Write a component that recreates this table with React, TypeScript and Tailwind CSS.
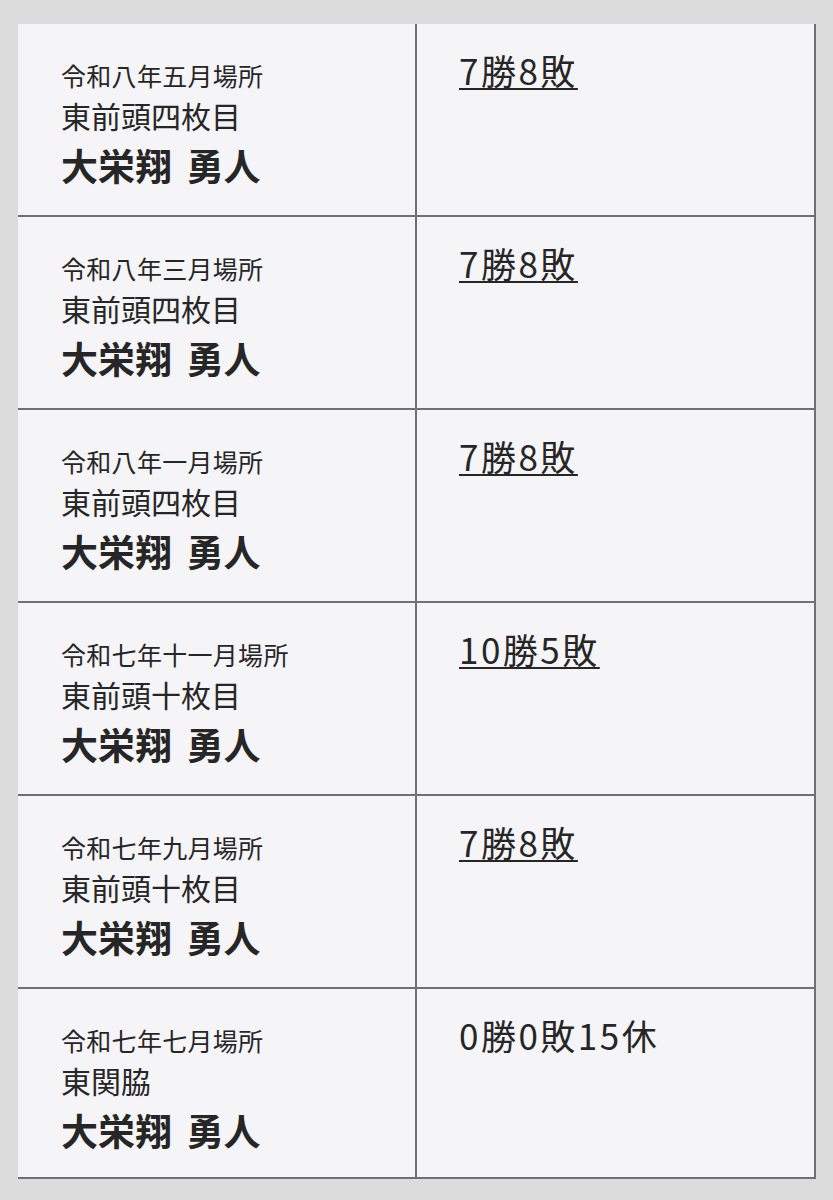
const rows = [
  { basho: "令和八年五月場所", rank: "東前頭四枚目", result: "7勝8敗", link: true },
  { basho: "令和八年三月場所", rank: "東前頭四枚目", result: "7勝8敗", link: true },
  { basho: "令和八年一月場所", rank: "東前頭四枚目", result: "7勝8敗", link: true },
  { basho: "令和七年十一月場所", rank: "東前頭十枚目", result: "10勝5敗", link: true },
  { basho: "令和七年九月場所", rank: "東前頭十枚目", result: "7勝8敗", link: true },
  { basho: "令和七年七月場所", rank: "東関脇", result: "0勝0敗15休", link: false },
];

export default function App() {
  return (
    <div
      className="min-h-[1200px] bg-[#dcdcdc] pt-[24px] pl-[18px] text-[#262626]"
      style={{ fontFamily: '"Noto Sans CJK JP", "Noto Sans", sans-serif' }}
    >
      <div className="w-[798px] border-r-2 border-[#707070]">
        {rows.map((r, i) => (
          <div
            key={i}
            className="grid grid-cols-[399px_1fr] border-b-2 border-[#707070] bg-[#f5f5f7]"
          >
            <div
              className={`${i === rows.length - 1 ? "h-[188px]" : "h-[191px]"} border-r-2 border-[#707070] pt-[31px] pl-[43px]`}
            >
              <div className="text-[25px] leading-[40px] tracking-[0.3px]">{r.basho}</div>
              <div className="text-[30px] leading-[40px]">{r.rank}</div>
              <div className="text-[37px] leading-[60px] font-bold [word-spacing:6px]">大栄翔 勇人</div>
            </div>
            <div className="pt-[26px] pl-[42px]">
              {r.link ? (
                <a className="text-[35px] leading-[40px] tracking-[2.5px] underline decoration-2 underline-offset-[3px] cursor-pointer">
                  {r.result}
                </a>
              ) : (
                <span className="text-[35px] leading-[40px] tracking-[2.5px]">{r.result}</span>
              )}
            </div>
          </div>
        ))}
      </div>
    </div>
  );
}
